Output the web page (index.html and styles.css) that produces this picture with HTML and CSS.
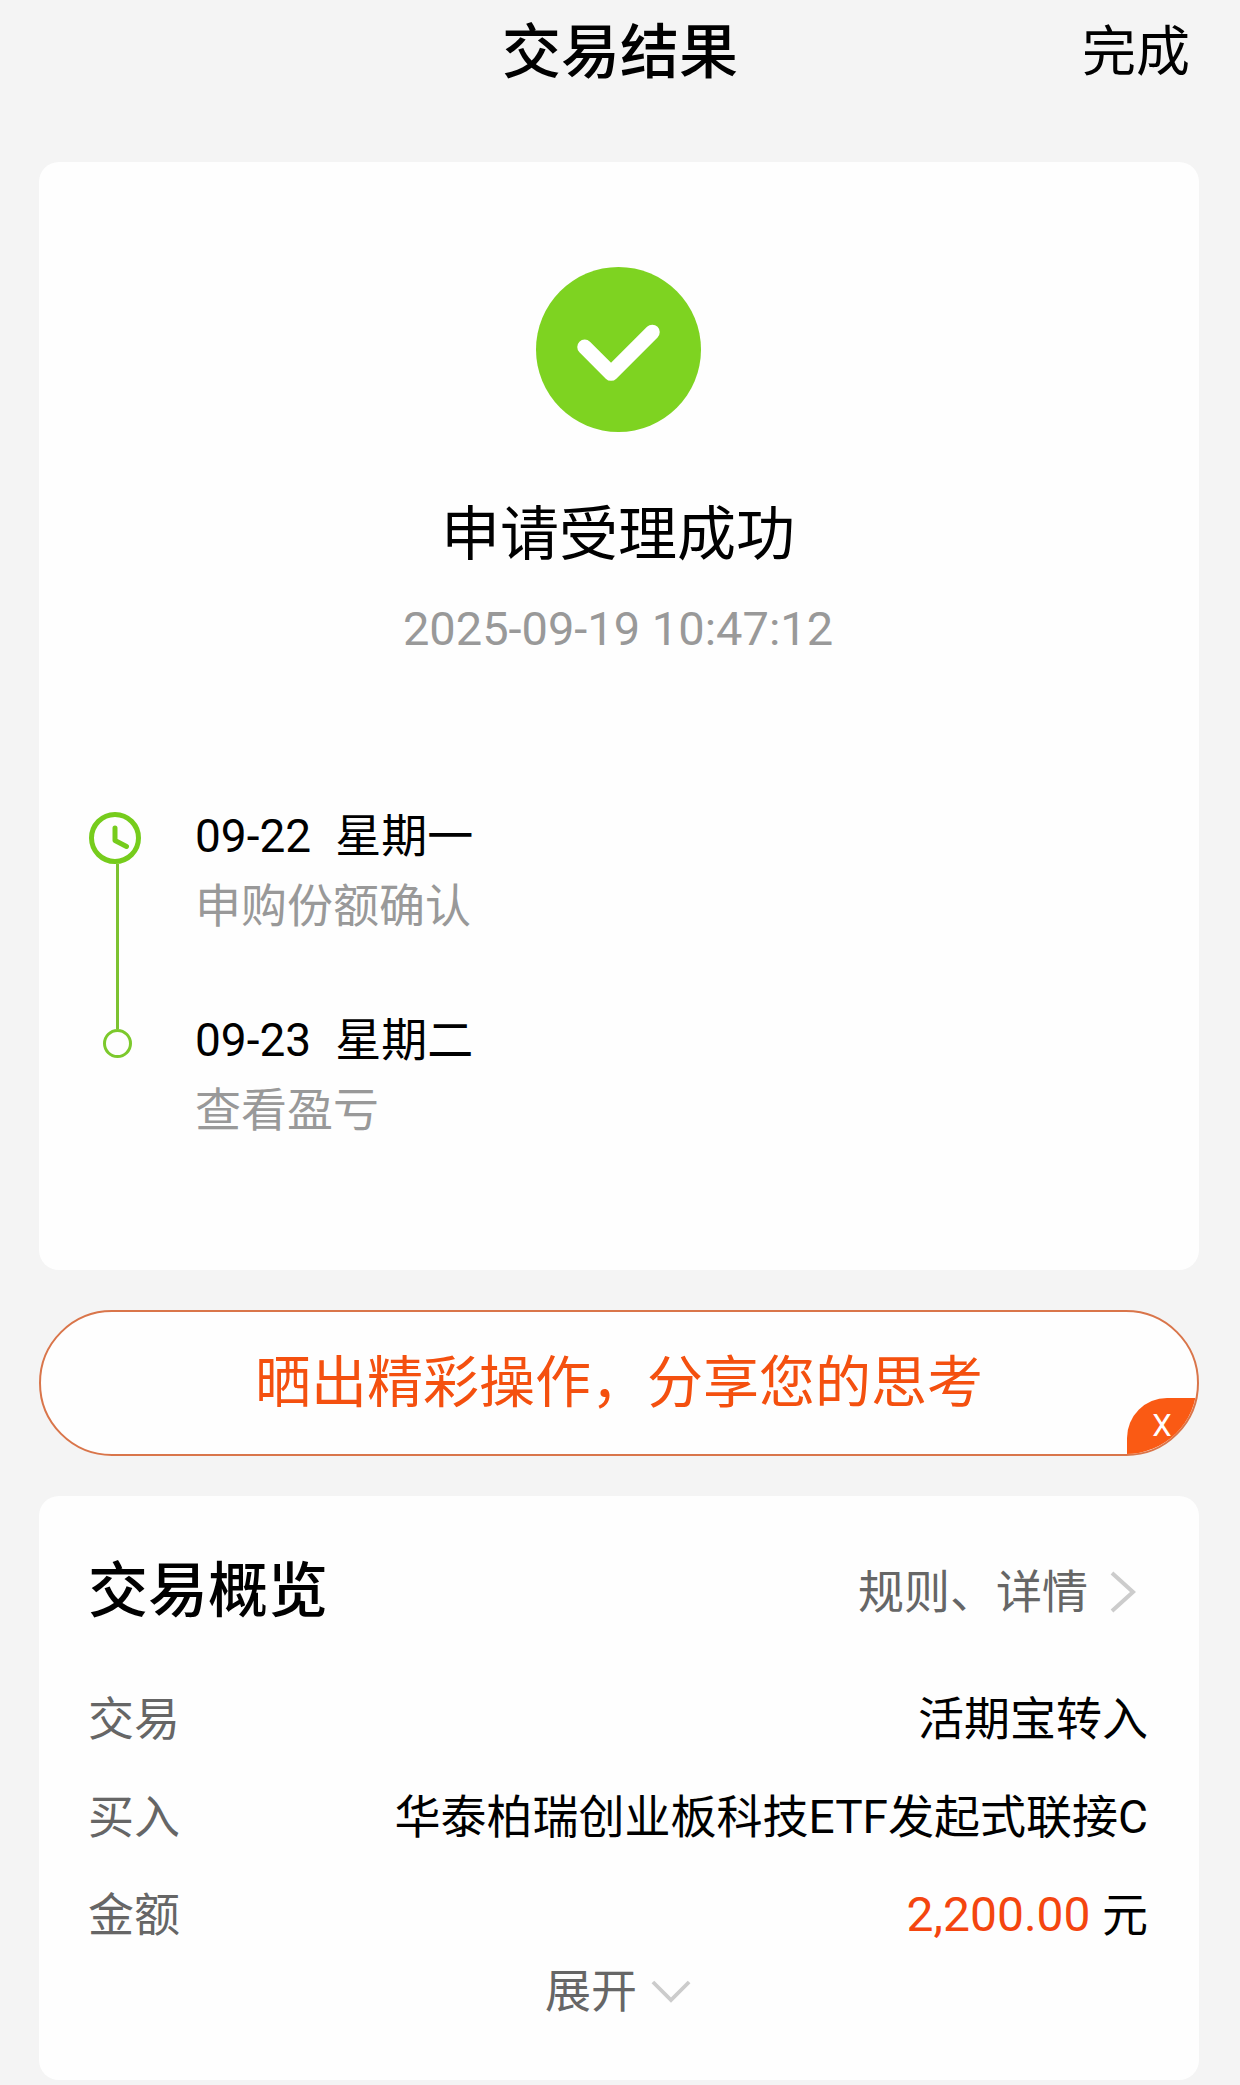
FILE: index.html
```html
<!DOCTYPE html>
<html lang="zh-CN">
<head>
<meta charset="utf-8">
<meta name="viewport" content="width=device-width, initial-scale=1">
<title>交易结果</title>
<link rel="stylesheet" href="styles.css">
</head>
<body>
<header class="topbar">
  <h1 class="topbar-title">交易结果</h1>
  <button class="topbar-done" type="button">完成</button>
</header>
<main class="content">
  <section class="card result">
    <svg class="result-icon" viewBox="0 0 166 166" aria-hidden="true">
      <circle cx="83" cy="83" r="83" fill="#7ed321"/>
      <path d="M49 80.500 75.500 107 117 65.500" fill="none" stroke="#fff" stroke-width="15" stroke-linecap="round" stroke-linejoin="round"/>
    </svg>
    <h2 class="result-title">申请受理成功</h2>
    <time class="result-time" datetime="2025-09-19T10:47:12">2025-09-19 10:47:12</time>
    <div class="timeline">
      <div class="rail" aria-hidden="true">
        <svg class="rail-clock" viewBox="0 0 52 52">
          <circle cx="26" cy="26" r="23.500"/>
          <path d="M26 16v12.500l11.500 6"/>
        </svg>
        <span class="rail-line"></span>
        <span class="rail-dot"></span>
      </div>
      <ol class="steps">
        <li>
          <p class="step-date"><span>09-22</span><span>星期一</span></p>
          <p class="step-note">申购份额确认</p>
        </li>
        <li>
          <p class="step-date"><span>09-23</span><span>星期二</span></p>
          <p class="step-note">查看盈亏</p>
        </li>
      </ol>
    </div>
  </section>

  <div class="share">
    <button class="share-main" type="button">晒出精彩操作，分享您的思考</button>
    <button class="share-close" type="button" aria-label="关闭">X</button>
  </div>

  <section class="card overview">
    <div class="overview-head">
      <h2 class="overview-title">交易概览</h2>
      <a class="overview-link" href="#rules">规则、详情
        <svg class="chevron-right" viewBox="0 0 26 42" aria-hidden="true"><path d="M2 2 23 21 2 40"/></svg>
      </a>
    </div>
    <dl class="rows">
      <div class="row"><dt>交易</dt><dd>活期宝转入</dd></div>
      <div class="row"><dt>买入</dt><dd>华泰柏瑞创业板科技ETF发起式联接C</dd></div>
      <div class="row"><dt>金额</dt><dd><span class="amount">2,200.00</span> 元</dd></div>
    </dl>
    <button class="expand" type="button">展开
      <svg class="chevron-down" viewBox="0 0 42 24" aria-hidden="true"><path d="M2 2 21 21 40 2"/></svg>
    </button>
  </section>
</main>
</body>
</html>
```
FILE: styles.css
```css
* {
  box-sizing: border-box;
}

body {
  margin: 0;
  background: #f4f4f4;
  color: #000;
  font-family: Roboto, "Noto Sans CJK SC", sans-serif;
  font-size: 46px;
  line-height: 68px;
}

h1, h2, p, ol, dl, dd {
  margin: 0;
  padding: 0;
}

button {
  padding: 0;
  border: 0;
  background: none;
  color: inherit;
  font: inherit;
  cursor: pointer;
}

.topbar {
  display: grid;
  grid-template-columns: 1fr auto 1fr;
  align-items: center;
  height: 106px;
  padding: 0 50px;
}

.topbar-title {
  grid-column: 2;
  font-size: 59px;
  font-weight: 500;
}

.topbar-done {
  justify-self: end;
  font-size: 54px;
}

.content {
  display: flex;
  flex-direction: column;
  gap: 40px;
  padding: 56px 41px 5px 39px;
}

.card {
  border-radius: 20px;
  background: #fefefe;
}

.result {
  display: flex;
  flex-direction: column;
  align-items: center;
  padding: 105px 52px 126px 50px;
}

.result-icon {
  width: 165px;
  height: 165px;
}

.result-title {
  margin-top: 69px;
  font-size: 59px;
  font-weight: 400;
}

.result-time {
  margin-top: 26px;
  color: #999;
  font-size: 47px;
}

.timeline {
  display: flex;
  gap: 49px;
  align-self: stretch;
  margin-top: 139px;
}

.rail {
  display: flex;
  flex-direction: column;
  align-items: center;
  width: 57px;
  padding: 10px 0 86px;
}

.rail-clock {
  align-self: flex-start;
  width: 52px;
  height: 52px;
  fill: none;
  stroke: #76cc1c;
  stroke-width: 5;
  stroke-linecap: round;
  stroke-linejoin: round;
}

.rail-line {
  flex: 1;
  width: 3px;
  background: #7cc230;
}

.rail-dot {
  width: 29px;
  height: 29px;
  border: 3px solid #7cc92c;
  border-radius: 50%;
}

.steps {
  display: flex;
  flex-direction: column;
  gap: 66px;
  list-style: none;
}

.step-date {
  display: flex;
  gap: 24px;
}

.step-note {
  margin-top: 2px;
  color: #999;
}

.share {
  position: relative;
  overflow: hidden;
  border: 2px solid #d9754a;
  border-radius: 73px;
  background: #fefefe;
}

.share-main {
  display: block;
  width: 100%;
  height: 142px;
  color: #f4500f;
  font-size: 56px;
}

.share-close {
  position: absolute;
  right: 0;
  bottom: 0;
  width: 70px;
  height: 56px;
  border-top-left-radius: 40px;
  background: #fa5a14;
  color: #fff;
  font-size: 31px;
  line-height: 56px;
}

.overview {
  display: flex;
  flex-direction: column;
  padding: 62px 51px 55px 49px;
}

.overview-head {
  display: flex;
  align-items: center;
  justify-content: space-between;
}

.overview-title {
  font-size: 60px;
  font-weight: 500;
}

.overview-link {
  display: flex;
  align-items: center;
  gap: 22px;
  margin-right: 12px;
  color: #666;
  text-decoration: none;
}

.chevron-right,
.chevron-down {
  fill: none;
  stroke: #ccc;
  stroke-width: 4;
}

.chevron-right {
  width: 26px;
  height: 42px;
}

.chevron-down {
  width: 40px;
  height: 23px;
}

.rows {
  display: flex;
  flex-direction: column;
  gap: 30px;
  margin-top: 59px;
}

.row {
  display: flex;
  justify-content: space-between;
}

.row dt {
  color: #666;
}

.amount {
  color: #f4450f;
  font-size: 48px;
}

.expand {
  display: flex;
  align-items: center;
  align-self: center;
  gap: 14px;
  margin-top: 8px;
  color: #666;
}
```
